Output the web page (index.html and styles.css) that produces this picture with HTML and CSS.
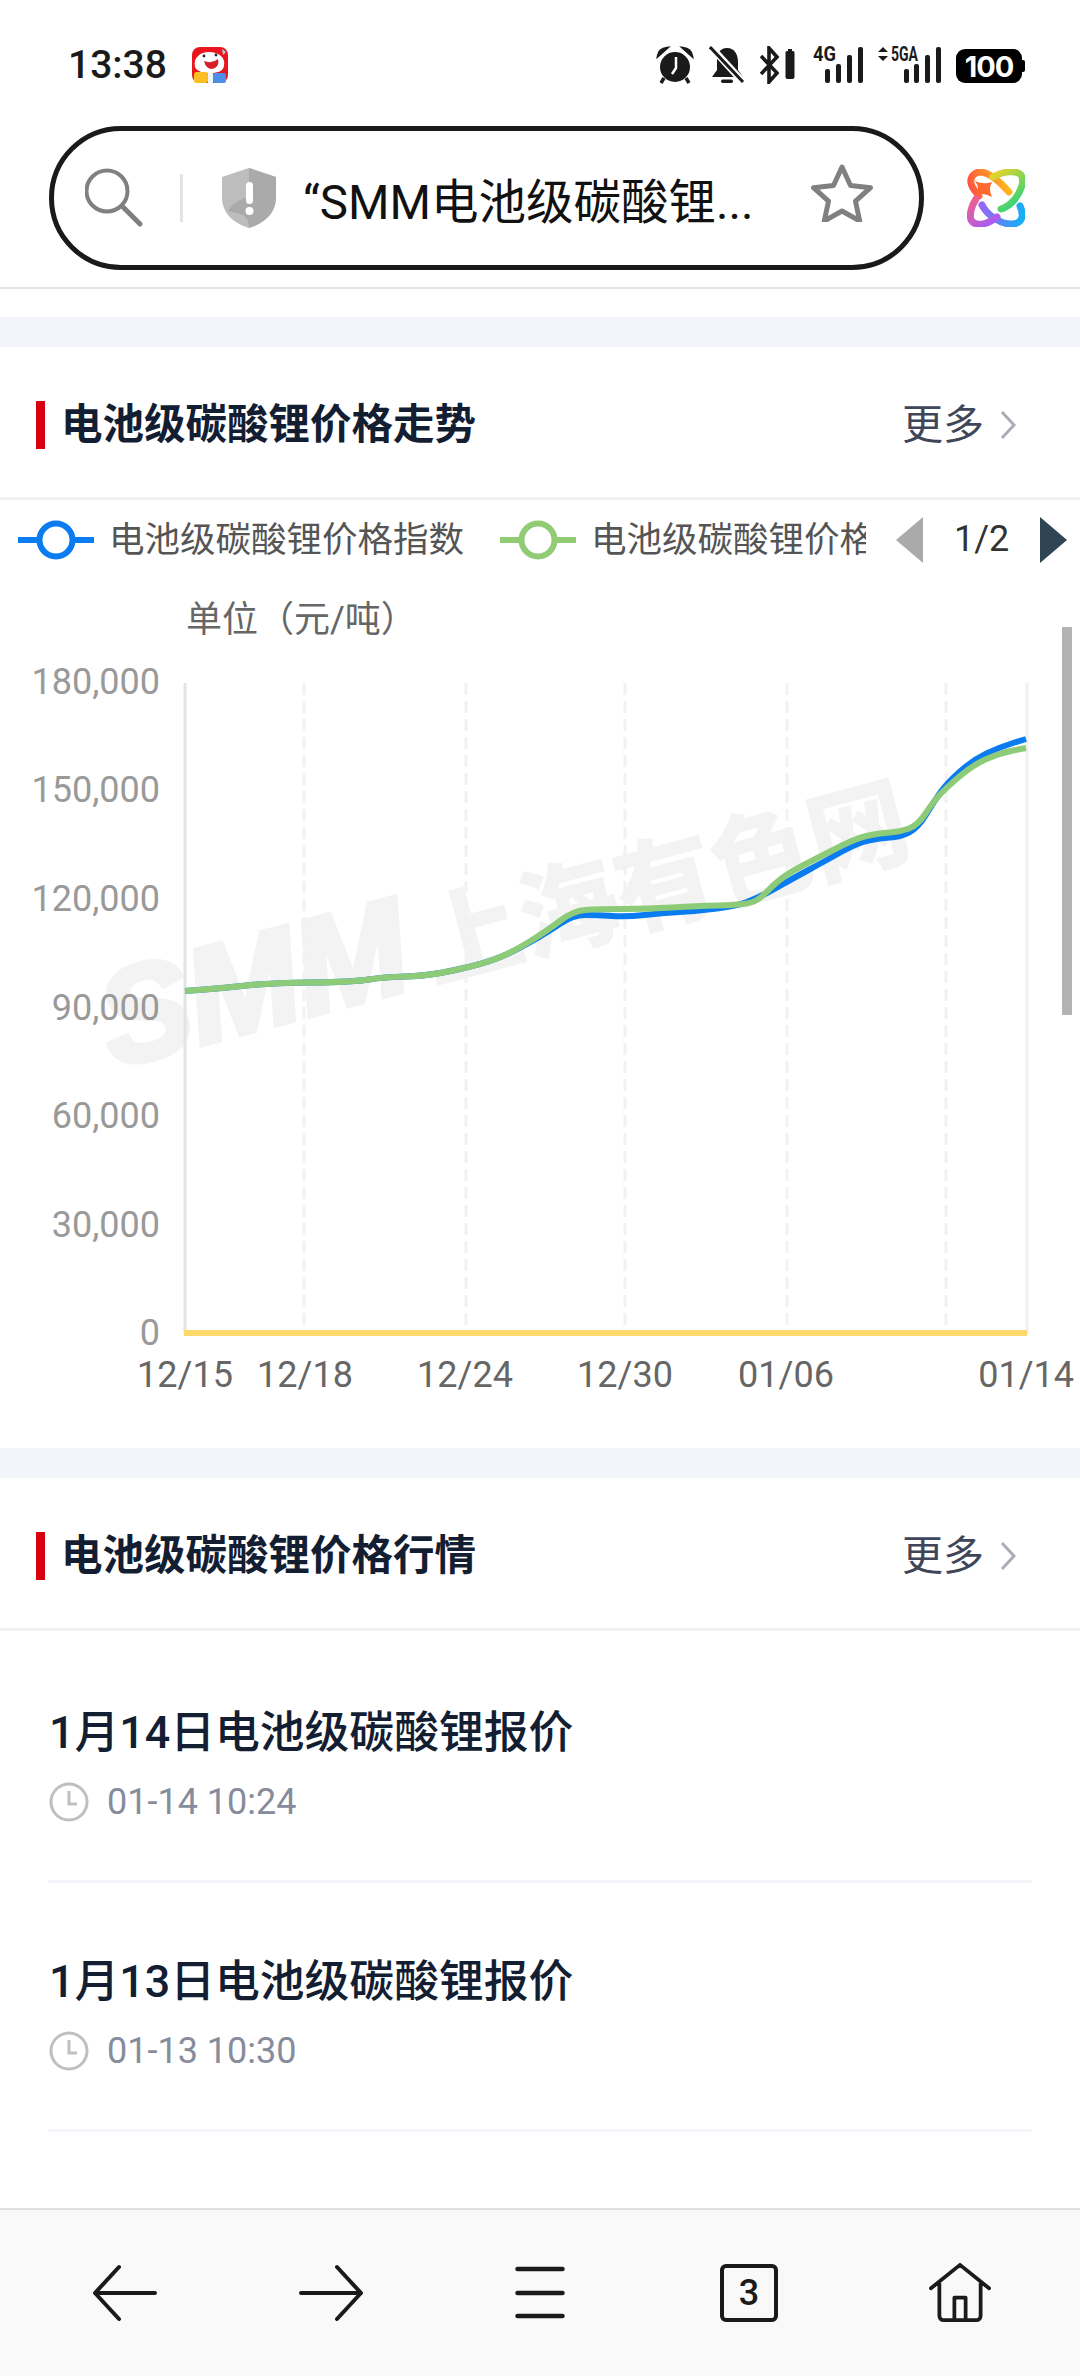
FILE: index.html
```html
<!DOCTYPE html>
<html>
<head>
    <title>电池级碳酸锂价格走势</title>
    <link rel="stylesheet" href="styles.css">
</head>
<body>
    <div class="statusbar">
        <span class="clock-text">13:38</span>
        <svg class="app-icon" viewBox="0 0 36 36">
            <rect width="36" height="36" rx="8" fill="#e8161d"/>
            <path d="M3 20C1 11 8 5 17 5s17 5 15 14c-1 5-6 7-13 7S5 25 3 20z" fill="#fff"/>
            <path d="M12 14q8 3 14-2q2 8-6 10q-6 0-8-8z" fill="#d8202a"/>
            <circle cx="12" cy="9" r="1.400" fill="#222"/>
            <circle cx="24" cy="8" r="1.400" fill="#222"/>
            <path d="M30 2l4 3-3 3z" fill="#b9c6ea"/>
            <rect x="2" y="25" width="14" height="11" rx="2.500" fill="#fbbf24"/>
            <rect x="21" y="26" width="13" height="10" rx="2" fill="#4d8fe8"/>
            <rect x="16" y="26" width="5" height="10" fill="#f3f4f6"/>
        </svg>
        <div class="status-icons">
            <svg class="st-alarm" viewBox="0 0 38 38">
                <circle cx="19" cy="21" r="15" fill="#1a1a1a"/>
                <path d="M2 10Q3 3 11 2L2 10zM36 10Q35 3 27 2L36 10z" fill="#1a1a1a" stroke="#1a1a1a" stroke-width="2.500"/>
                <path d="M8 32l-3 5M30 32l3 5" stroke="#1a1a1a" stroke-width="3.500"/>
                <path d="M20 11v11l-4 6" fill="none" stroke="#fff" stroke-width="2.500"/>
            </svg>
            <svg class="st-bell" viewBox="0 0 36 38">
                <path d="M18 2c8 0 11 7 11 14v8l5 7H3l5-7v-8C8 9 10 2 18 2z" fill="#1a1a1a"/>
                <rect x="12" y="33.500" width="12" height="3.500" rx="1.700" fill="#1a1a1a"/>
                <path d="M1 0L34 36" stroke="#fff" stroke-width="7"/>
                <path d="M1 1L34 36" stroke="#1a1a1a" stroke-width="3"/>
            </svg>
            <svg class="st-bt" viewBox="0 0 38 38">
                <path d="M1 10L17 27l-8 9V2l8 9L1 28" fill="none" stroke="#1a1a1a" stroke-width="3.600"/>
                <path d="M25 6.500q0-1.500 1.500-1.500h1V3h4v2h1q1.500 0 1.500 1.500V31q0 2-2 2h-5q-2 0-2-2z" fill="#1a1a1a" transform="translate(.5 0)"/>
            </svg>
            <svg class="st-net st-4g" viewBox="0 -8 50 46">
                <text class="net-text" x="0" y="15" textLength="23" lengthAdjust="spacingAndGlyphs">4G</text>
                <rect x="12" y="23" width="5" height="14" rx="2" fill="#1a1a1a"/>
                <rect x="23" y="18" width="5" height="19" rx="2" fill="#1a1a1a"/>
                <rect x="34" y="9" width="5" height="28" rx="2" fill="#1a1a1a"/>
                <rect x="45" y="1" width="5" height="36" rx="2" fill="#1a1a1a"/>
            </svg>
            <svg class="st-net st-5g" viewBox="0 -8 63 46">
                <path d="M5 1l5 5H0zM5 15l5-5H0z" fill="#1a1a1a"/>
                <text class="net-text" x="13" y="15" textLength="27" lengthAdjust="spacingAndGlyphs">5GA</text>
                <rect x="26" y="23" width="5" height="14" rx="2" fill="#1a1a1a"/>
                <rect x="36" y="18" width="5" height="19" rx="2" fill="#1a1a1a"/>
                <rect x="47" y="9" width="5" height="28" rx="2" fill="#1a1a1a"/>
                <rect x="58" y="1" width="5" height="36" rx="2" fill="#1a1a1a"/>
            </svg>
            <div class="battery"><span class="battery-text">100</span></div>
        </div>
    </div>

    <div class="urlrow">
        <div class="pill">
            <svg class="ic-search" viewBox="0 0 60 60">
                <circle cx="22" cy="23" r="20.500" fill="none" stroke="#808080" stroke-width="4"/>
                <path d="M37 38l18 18" stroke="#808080" stroke-width="5" stroke-linecap="round"/>
            </svg>
            <span class="pill-sep"></span>
            <svg class="ic-shield" viewBox="0 0 54 60">
                <path d="M27 0L54 9v20c0 16-11 26-27 31C11 55 0 45 0 29V9z" fill="#bdbdbd"/>
                <path d="M27 0L54 9v20c0 16-11 26-27 31 0-12-6-14-21-17C14 30 27 30 27 28z" fill="#aaa"/>
                <rect x="24" y="14" width="7" height="22" rx="3.500" fill="#fff"/>
                <circle cx="27.500" cy="43" r="4" fill="#fff"/>
            </svg>
            <span class="pill-text">“SMM电池级碳酸锂...</span>
            <svg class="ic-star" viewBox="0 0 62 58">
                <path d="M31 3l8.500 18.500 20 2.200-15 13.500 4.200 19.800L31 47 13.300 57l4.200-19.800-15-13.500 20-2.200z" fill="none" stroke="#808080" stroke-width="5" stroke-linejoin="round"/>
            </svg>
        </div>
        <svg class="ic-logo" viewBox="0 0 58 58">
            <defs>
                <linearGradient id="gTop" gradientUnits="userSpaceOnUse" x1="4" y1="24" x2="42" y2="10">
                    <stop offset="0" stop-color="#ff5240"/>
                    <stop offset="1" stop-color="#ffc21a"/>
                </linearGradient>
                <linearGradient id="gRight" gradientUnits="userSpaceOnUse" x1="26" y1="6" x2="50" y2="36">
                    <stop offset="0" stop-color="#e5d32a"/>
                    <stop offset="1" stop-color="#2fd47a"/>
                </linearGradient>
                <linearGradient id="gBottom" gradientUnits="userSpaceOnUse" x1="14" y1="40" x2="56" y2="44">
                    <stop offset="0" stop-color="#9a63f5"/>
                    <stop offset="1" stop-color="#14b0f5"/>
                </linearGradient>
                <linearGradient id="gLeft" gradientUnits="userSpaceOnUse" x1="6" y1="28" x2="26" y2="54">
                    <stop offset="0" stop-color="#f0608a"/>
                    <stop offset="1" stop-color="#a85cf5"/>
                </linearGradient>
            </defs>
            <path d="M12 27C10 24 5 20 4 14C3 7 8 3 14 3C24 4 34 14 42 23" fill="none" stroke="url(#gTop)" stroke-width="7" stroke-linecap="round"/>
            <path d="M26 8C36 2 50 1 54 6C58 12 54 22 48 30C44 35 40 38 34 40" fill="none" stroke="url(#gRight)" stroke-width="7" stroke-linecap="round"/>
            <path d="M15 36C20 46 34 56 46 55C56 54 57 46 53 37" fill="none" stroke="url(#gBottom)" stroke-width="7" stroke-linecap="round"/>
            <path d="M30 48C20 56 8 58 4 51C2 45 5 36 9 30" fill="none" stroke="url(#gLeft)" stroke-width="7" stroke-linecap="round"/>
            <path d="M8 12Q16 16 25 13Q21 20 25 28Q16 23 10 26Q13 19 8 12z" fill="#ff6a2c"/>
        </svg>
    </div>

    <div class="main">
        <div class="band"></div>
        <div class="section-head">
            <span class="head-mark"></span>
            <span class="head-title">电池级碳酸锂价格走势</span>
            <span class="head-more">更多</span>
            <svg class="head-arrow" viewBox="0 0 16 30"><path d="M2 2l12 13L2 28" fill="none" stroke="#a8adb8" stroke-width="3"/></svg>
        </div>

        <div class="legend">
            <svg class="legend-icon" viewBox="0 0 76 40">
                <path d="M0 20h76" stroke="#0a7cf0" stroke-width="6"/>
                <circle cx="38" cy="20" r="16.500" fill="#fff" stroke="#0a7cf0" stroke-width="6"/>
            </svg>
            <span class="legend-label">电池级碳酸锂价格指数</span>
            <svg class="legend-icon legend-icon-2" viewBox="0 0 76 40">
                <path d="M0 20h76" stroke="#91cc75" stroke-width="6"/>
                <circle cx="38" cy="20" r="16.500" fill="#fff" stroke="#91cc75" stroke-width="6"/>
            </svg>
            <span class="legend-label legend-clip">电池级碳酸锂价格</span>
            <svg class="page-prev" viewBox="0 0 27 46"><path d="M27 0v46L0 23z" fill="#aaa"/></svg>
            <span class="page-num">1/2</span>
            <svg class="page-next" viewBox="0 0 27 46"><path d="M0 0v46l27-23z" fill="#2f4554"/></svg>
        </div>

        <svg class="chart" viewBox="0 580 1080 868">
            <g transform="rotate(-15 114 1068)">
                <text class="wm wm-en" x="114" y="1068">SMM</text>
                <text class="wm wm-cn" x="444" y="1068">上海有色网</text>
            </g>

            <text class="unit" x="186" y="632">单位（元/吨）</text>

            <path class="grid" d="M304 683V1331M466 683V1331M625 683V1331M787 683V1331M946 683V1331"/>
            <path class="axis" d="M185 683V1334"/>
            <path class="axis-end" d="M1027 683V1334"/>

            <text class="ylab" x="160" y="694">180,000</text>
            <text class="ylab" x="160" y="802">150,000</text>
            <text class="ylab" x="160" y="911">120,000</text>
            <text class="ylab" x="160" y="1020">90,000</text>
            <text class="ylab" x="160" y="1128">60,000</text>
            <text class="ylab" x="160" y="1237">30,000</text>
            <text class="ylab" x="160" y="1345">0</text>

            <text class="xlab" x="185" y="1387">12/15</text>
            <text class="xlab" x="305" y="1387">12/18</text>
            <text class="xlab" x="465" y="1387">12/24</text>
            <text class="xlab" x="625" y="1387">12/30</text>
            <text class="xlab" x="786" y="1387">01/06</text>
            <text class="xlab xlab-end" x="1074" y="1387">01/14</text>

            <path class="line-yellow" d="M184 1333H1027"/>
            <path class="line-blue" d="M185 991L204.500 989.500Q224 988 246.500 985.500Q269 983 311.500 982.500Q354 982 369 979.500Q384 977 406 976.500Q428 976 455.500 970Q483 964 498 958Q513 952 530.500 942Q548 932 560.500 923.500Q573 915 585 915Q597 915 612 916Q627 917 644.500 915Q662 913 679.500 912Q697 911 717 908.500Q737 906 747 902Q757 898 765 894Q773 890 781.500 885Q790 880 808.500 870Q827 860 842 851.500Q857 843 868.500 840.500Q880 838 890 837.500Q900 837 909 832.500Q918 828 925.500 815.500Q933 803 940 793Q947 783 960 771.500Q973 760 986.500 753.500Q1000 747 1013 743L1026 739"/>
            <path class="line-green" d="M185 991L204.500 989.500Q224 988 246.500 985.500Q269 983 311.500 982.500Q354 982 369 979.500Q384 977 406 976.500Q428 976 455.500 970Q483 964 498 958Q513 952 530.500 941Q548 930 560.500 920.500Q573 911 585 910Q597 909 622 909Q647 909 672 907.500Q697 906 717 905.500Q737 905 747 903.500Q757 902 765 893.500Q773 885 781.500 878.500Q790 872 808.500 862.500Q827 853 842 845.500Q857 838 868.500 835.500Q880 833 890 832.500Q900 832 909 828.500Q918 825 925.500 813.500Q933 802 940 794.500Q947 787 960 776Q973 765 986.500 759Q1000 753 1013 750.500L1026 748"/>
        </svg>

        <div class="band band-2"></div>
        <div class="section-head">
            <span class="head-mark"></span>
            <span class="head-title">电池级碳酸锂价格行情</span>
            <span class="head-more">更多</span>
            <svg class="head-arrow" viewBox="0 0 16 30"><path d="M2 2l12 13L2 28" fill="none" stroke="#a8adb8" stroke-width="3"/></svg>
        </div>

        <div class="news-list">
            <div class="news-item">
                <div class="news-title">1月14日电池级碳酸锂报价</div>
                <div class="news-meta">
                    <svg class="ic-clock" viewBox="0 0 40 40">
                        <circle cx="20" cy="20" r="18" fill="none" stroke="#bdbfc2" stroke-width="3"/>
                        <path d="M20 9v13h8" fill="none" stroke="#bdbfc2" stroke-width="3"/>
                    </svg>
                    <span>01-14 10:24</span>
                </div>
            </div>
            <div class="news-item">
                <div class="news-title">1月13日电池级碳酸锂报价</div>
                <div class="news-meta">
                    <svg class="ic-clock" viewBox="0 0 40 40">
                        <circle cx="20" cy="20" r="18" fill="none" stroke="#bdbfc2" stroke-width="3"/>
                        <path d="M20 9v13h8" fill="none" stroke="#bdbfc2" stroke-width="3"/>
                    </svg>
                    <span>01-13 10:30</span>
                </div>
            </div>
        </div>
    </div>

    <div class="toolbar">
        <svg class="tool" viewBox="0 0 70 60">
            <path d="M30 4L6 30l24 26M6 30h60" fill="none" stroke="#1a1a1a" stroke-width="4" stroke-linecap="round" stroke-linejoin="round"/>
        </svg>
        <svg class="tool tool-fwd" viewBox="0 0 70 60">
            <path d="M40 4l24 26-24 26M64 30H4" fill="none" stroke="#1a1a1a" stroke-width="4" stroke-linecap="round" stroke-linejoin="round"/>
        </svg>
        <svg class="tool tool-menu" viewBox="0 0 70 60">
            <path d="M12.500 6h45M12.500 30h45M12.500 53h45" fill="none" stroke="#1a1a1a" stroke-width="4.500" stroke-linecap="round"/>
        </svg>
        <div class="tab-count">3</div>
        <svg class="tool" viewBox="0 0 70 64">
            <path d="M4 27L35 2l31 25M13 22v34q0 5 5 5h34q5 0 5-5V22M29 61V37h12v24" fill="none" stroke="#1a1a1a" stroke-width="4" stroke-linejoin="round" stroke-linecap="round"/>
        </svg>
    </div>

    <div class="scroll-thumb"></div>
</body>
</html>
```

FILE: styles.css
```css
* { box-sizing: border-box; }
body { margin: 0; width: 1080px; height: 2376px; position: relative; overflow: hidden; background: #fff; display: flex; flex-direction: column; font-family: Roboto, "Noto Sans CJK SC", sans-serif; }

.statusbar { height: 126px; padding: 46px 58px 0 68px; display: flex; align-items: flex-start; }
.clock-text { font-size: 39px; line-height: 38px; font-weight: 500; color: #1a1a1a; }
.app-icon { width: 36px; height: 36px; margin-left: 25px; margin-top: 1px; }
.status-icons { margin-left: auto; display: flex; gap: 15px; height: 38px; }
.status-icons svg { height: 38px; display: block; }
.st-alarm { width: 38px; }
.st-bell { width: 36px; }
.st-bt { width: 38px; }
.status-icons .st-net { height: 46px; margin-top: -8px; }
.st-4g { width: 50px; }
.st-5g { width: 63px; }
.net-text { font-family: Roboto, sans-serif; font-size: 21px; font-weight: 700; fill: #1a1a1a; }
.battery { width: 66px; height: 34px; margin-top: 3px; background: #000; border-radius: 9px; color: #fff; display: flex; align-items: center; justify-content: center; position: relative; }
.battery:after { content: ""; position: absolute; right: -3px; top: 11px; width: 3px; height: 12px; background: #000; border-radius: 0 2px 2px 0; }
.battery-text { font-family: Inter, sans-serif; font-size: 29px; font-weight: 700; letter-spacing: -1px; }

.urlrow { height: 163px; padding: 0 0 17px 49px; display: flex; align-items: center; border-bottom: 2px solid #e5e5e5; }
.pill { width: 875px; height: 144px; border: 5px solid #1a1a1a; border-radius: 72px; padding: 0 46px 0 31px; display: flex; align-items: center; }
.ic-search { width: 60px; height: 60px; flex: none; }
.pill-sep { width: 3px; height: 48px; margin-left: 35px; background: #e3e3e3; flex: none; }
.ic-shield { width: 54px; height: 60px; margin-left: 39px; flex: none; }
.pill-text { margin-left: 27px; font-size: 47.500px; color: #111; white-space: nowrap; }
.ic-star { width: 62px; height: 58px; margin-left: auto; margin-bottom: 10px; flex: none; }
.ic-logo { width: 58px; height: 58px; margin-left: 43px; }

.main { flex: 1; overflow: hidden; }
.band { height: 30px; margin-top: 28px; background: #f2f5fa; }
.band-2 { margin-top: 0; }

.section-head { height: 153px; padding: 54px 64px 0 36px; display: flex; align-items: flex-start; border-bottom: 3px solid #f2f2f2; }
.head-mark { width: 9px; height: 48px; background: #d7000f; }
.head-title { margin-left: 16px; font-size: 41.500px; line-height: 48px; font-weight: 700; color: #141e33; }
.head-more { margin-left: auto; font-size: 41px; line-height: 48px; color: #3f4659; }
.head-arrow { width: 16px; height: 30px; margin-left: 16px; margin-top: 9px; }

.legend { height: 80px; padding-left: 18px; display: flex; align-items: center; }
.legend-icon { width: 76px; height: 40px; flex: none; }
.legend-icon-2 { margin-left: 36px; }
.legend-label { margin-left: 15px; margin-bottom: 7px; font-size: 35.500px; color: #555; white-space: nowrap; }
.legend-clip { width: 275px; overflow: hidden; flex: none; }
.page-prev { width: 27px; height: 46px; margin-left: 30px; flex: none; }
.page-num { margin-left: 31px; margin-bottom: 2px; font-size: 36px; color: #333; }
.page-next { width: 27px; height: 46px; margin-left: 31px; flex: none; }

.chart { display: block; width: 1080px; height: 868px; }
.wm { fill: #f3f3f3; }
.wm-en { font-family: "Liberation Sans", sans-serif; font-size: 134px; font-weight: 700; font-style: italic; stroke: #f3f3f3; stroke-width: 6; }
.wm-cn { font-family: "Noto Sans CJK SC", sans-serif; font-size: 100px; font-weight: 900; }
.unit { font-size: 36px; fill: #666; }
.grid { stroke: #f2f2f2; stroke-width: 3; stroke-dasharray: 12 6; fill: none; }
.axis { stroke: #e3e3e3; stroke-width: 3; }
.axis-end { stroke: #f0f0f0; stroke-width: 3; }
.ylab { font-size: 36px; fill: #999; text-anchor: end; }
.xlab { font-size: 36px; fill: #666; text-anchor: middle; }
.xlab-end { text-anchor: end; }
.line-yellow { stroke: #fbd96b; stroke-width: 6; fill: none; }
.line-blue { stroke: #0a7cf0; stroke-width: 6; fill: none; }
.line-green { stroke: #8ecb78; stroke-width: 6; fill: none; }

.news-list { margin: 0 48px; padding-top: 3px; }
.news-item { padding: 69px 0 58px 1px; border-bottom: 3px solid #f2f5f9; }
.news-title { font-size: 44.800px; line-height: 60px; font-weight: 500; color: #141e33; }
.news-meta { margin-top: 19px; height: 40px; display: flex; align-items: center; font-size: 36px; color: #868c9c; }
.ic-clock { width: 40px; height: 40px; margin-right: 18px; }

.toolbar { height: 168px; padding-left: 19px; background: #f9f9f9; border-top: 2px solid #e0e0e0; display: grid; grid-template-columns: repeat(5, 209px); align-items: center; justify-items: center; }
.tool { width: 70px; height: 60px; }
.tool-fwd { margin-right: 2px; }
.tool-menu { margin-right: 4px; }
.tab-count { width: 58px; height: 58px; margin-right: 3px; border: 4px solid #1a1a1a; border-radius: 6px; font-size: 36px; font-weight: 500; color: #1a1a1a; display: flex; align-items: center; justify-content: center; }

.scroll-thumb { position: absolute; right: 8px; top: 627px; width: 10px; height: 388px; background: #b3b3b3; }
```
